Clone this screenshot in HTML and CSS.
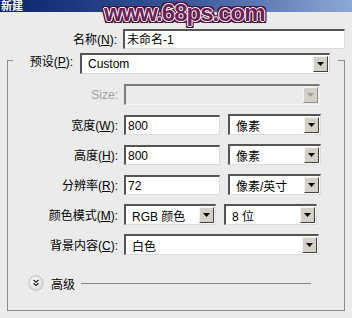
FILE: index.html
```html
<!DOCTYPE html>
<html lang="zh-CN">
<head>
    <meta charset="UTF-8">
    <title>新建</title>
    <link rel="stylesheet" href="styles.css">
</head>
<body>
    <div class="titlebar"><span class="title">新建</span></div>
    <div class="watermark">www.68ps.com</div>

    <div class="dialog">
        <div class="row name-row">
            <label class="label">名称(<u>N</u>):</label>
            <div class="input wide">未命名-1</div>
        </div>

        <fieldset class="group">
            <legend class="legend">
                <label class="label preset-label">预设(<u>P</u>):</label>
                <div class="select preset"><span class="value">Custom</span><span class="arrow"><svg width="7" height="4" viewBox="0 0 7 4"><polygon points="0,0 7,0 3.5,4" fill="#000"/></svg></span></div>
            </legend>

            <div class="rows">
                <div class="row">
                    <label class="label muted">Size:</label>
                    <div class="select disabled size"><span class="value"></span><span class="arrow"><svg width="7" height="4" viewBox="0 0 7 4"><polygon points="0,0 7,0 3.5,4" fill="#a0a0a0"/></svg></span></div>
                </div>
                <div class="row">
                    <label class="label">宽度(<u>W</u>):</label>
                    <div class="input num">800</div>
                    <div class="select unit"><span class="value">像素</span><span class="arrow"><svg width="7" height="4" viewBox="0 0 7 4"><polygon points="0,0 7,0 3.5,4" fill="#000"/></svg></span></div>
                </div>
                <div class="row">
                    <label class="label">高度(<u>H</u>):</label>
                    <div class="input num">800</div>
                    <div class="select unit"><span class="value">像素</span><span class="arrow"><svg width="7" height="4" viewBox="0 0 7 4"><polygon points="0,0 7,0 3.5,4" fill="#000"/></svg></span></div>
                </div>
                <div class="row">
                    <label class="label">分辨率(<u>R</u>):</label>
                    <div class="input num">72</div>
                    <div class="select unit"><span class="value">像素/英寸</span><span class="arrow"><svg width="7" height="4" viewBox="0 0 7 4"><polygon points="0,0 7,0 3.5,4" fill="#000"/></svg></span></div>
                </div>
                <div class="row">
                    <label class="label">颜色模式(<u>M</u>):</label>
                    <div class="select mode"><span class="value">RGB 颜色</span><span class="arrow"><svg width="7" height="4" viewBox="0 0 7 4"><polygon points="0,0 7,0 3.5,4" fill="#000"/></svg></span></div>
                    <div class="select unit"><span class="value">8 位</span><span class="arrow"><svg width="7" height="4" viewBox="0 0 7 4"><polygon points="0,0 7,0 3.5,4" fill="#000"/></svg></span></div>
                </div>
                <div class="row">
                    <label class="label">背景内容(<u>C</u>):</label>
                    <div class="select bg"><span class="value">白色</span><span class="arrow"><svg width="7" height="4" viewBox="0 0 7 4"><polygon points="0,0 7,0 3.5,4" fill="#000"/></svg></span></div>
                </div>
            </div>

            <div class="advanced">
                <svg class="toggle" width="16" height="16" viewBox="0 0 16 16">
                    <defs>
                        <radialGradient id="knob" cx="0.4" cy="0.35" r="0.7">
                            <stop offset="0" stop-color="#ffffff"/>
                            <stop offset="1" stop-color="#d6d6d6"/>
                        </radialGradient>
                    </defs>
                    <circle cx="8" cy="8" r="7.2" fill="url(#knob)" stroke="#b4b4b4" stroke-width="0.8"/>
                    <polyline points="5.5,5 8,7.2 10.5,5" fill="none" stroke="#222" stroke-width="1.3"/>
                    <polyline points="5.5,8.3 8,10.5 10.5,8.3" fill="none" stroke="#222" stroke-width="1.3"/>
                </svg>
                <span class="adv-text">高级</span>
                <span class="adv-line"></span>
            </div>
        </fieldset>
    </div>
</body>
</html>
```

FILE: styles.css
```css
body {
    margin: 0;
    width: 352px;
    height: 318px;
    overflow: hidden;
    background: #ebebeb;
    font-family: "Liberation Sans", "Noto Sans CJK SC", sans-serif;
    font-size: 12px;
    color: #000;
    position: relative;
}

.titlebar {
    height: 12px;
    background: linear-gradient(90deg, #0a246a 0%, #3c5a9c 55%, #8ea8d6 100%);
    overflow: hidden;
}

.title {
    display: block;
    margin-left: 1px;
    color: #fff;
    font-weight: bold;
    font-size: 11px;
    line-height: 12px;
}

.watermark {
    position: absolute;
    left: 104px;
    top: -1px;
    font-family: "Liberation Sans", sans-serif;
    font-weight: bold;
    font-size: 24px;
    letter-spacing: -1px;
    line-height: 28px;
    color: #6e1f58;
    text-shadow:
        1px 0 0 #fff, -1px 0 0 #fff, 0 1px 0 #fff, 0 -1px 0 #fff,
        2px 0 0 #4e1038, -2px 0 0 #4e1038, 0 2px 0 #4e1038, 0 -2px 0 #4e1038,
        2px 2px 0 #4e1038, -2px -2px 0 #4e1038, 2px -2px 0 #4e1038, -2px 2px 0 #4e1038;
}

.dialog {
    padding-top: 16px;
}

.row {
    display: flex;
    align-items: center;
    gap: 6px;
    height: 21px;
}

.label {
    width: 110px;
    text-align: right;
    white-space: nowrap;
    flex-shrink: 0;
}

.name-row .label {
    width: 117px;
}

.muted {
    color: #a0a0a0;
}

.input {
    box-sizing: border-box;
    height: 20px;
    background: #fff;
    border-style: solid;
    border-width: 2px 1px 1px 2px;
    border-color: #555 #dcdcdc #dcdcdc #555;
    padding: 1px 3px 0 2px;
    line-height: 16px;
    white-space: nowrap;
}

.wide {
    width: 222px;
}

.num {
    width: 96px;
}

.select {
    box-sizing: border-box;
    height: 21px;
    display: flex;
    align-items: center;
    background: #fff;
    border-style: solid;
    border-width: 2px 1px 1px 2px;
    border-color: #555 #dcdcdc #dcdcdc #555;
    padding-left: 6px;
}

.select .value {
    flex: 1;
    white-space: nowrap;
}

.arrow {
    box-sizing: border-box;
    width: 15px;
    height: 16px;
    margin-right: 1px;
    display: flex;
    align-items: center;
    justify-content: center;
    background: #d4d0c8;
    border-style: solid;
    border-width: 1px;
    border-color: #f4f4f4 #404040 #404040 #f4f4f4;
}

.disabled {
    background: #ebebeb;
    border-color: #7a7a7a #f6f6f6 #f6f6f6 #7a7a7a;
}

.disabled .arrow {
    border-color: #f4f4f4 #909090 #909090 #f4f4f4;
}

.size {
    width: 196px;
}

.unit {
    width: 93px;
    margin-left: 2px;
}

.mode {
    width: 92px;
}

.bg {
    width: 195px;
}

.group {
    margin: 4px 7px 0;
    padding: 0;
    height: 258px;
    box-sizing: border-box;
    border: 1px solid #8c8c8c;
}

.legend {
    display: flex;
    align-items: center;
    gap: 7px;
    margin-left: 5px;
    padding: 0 8px 0 0;
    height: 14px;
}

.preset-label {
    width: 60px;
}

.preset {
    width: 250px;
    margin-top: 7px;
}

.rows {
    display: flex;
    flex-direction: column;
    gap: 9px;
    margin-top: 17px;
}

.advanced {
    display: flex;
    align-items: center;
    margin: 20px 33px 0 20px;
    height: 16px;
}

.toggle {
    flex-shrink: 0;
}

.adv-text {
    margin-left: 7px;
}

.adv-line {
    flex: 1;
    height: 1px;
    background: #8a8a8a;
    margin-left: 6px;
}
```
